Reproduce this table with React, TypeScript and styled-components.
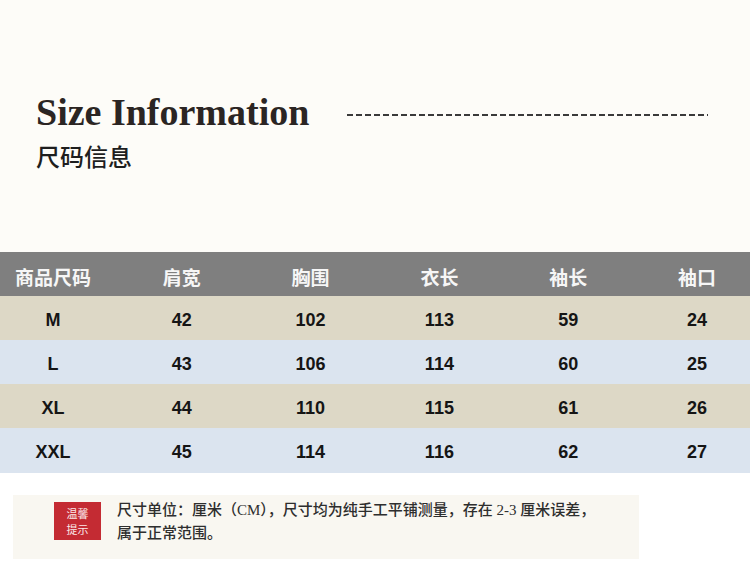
import React from "react";
import styled, { createGlobalStyle } from "styled-components";

const GlobalStyle = createGlobalStyle`
  html, body { margin: 0; padding: 0; background: #ffffff; }
  body { font-family: "Liberation Sans", "Noto Sans CJK SC", sans-serif; }
`;

const Page = styled.div`
  width: 750px;
  height: 566px;
  display: flex;
  flex-direction: column;
  overflow: hidden;
  background: #ffffff;
`;

const Hero = styled.header`
  height: 252px;
  background: #fdfcf8;
  padding: 93px 0 0 36px;
  box-sizing: border-box;
  display: flex;
  flex-direction: column;
`;

const TitleRow = styled.div`
  display: flex;
  align-items: center;
  gap: 38px;
  padding-right: 42px;
`;

const Title = styled.h1`
  margin: 0;
  font-family: "Liberation Serif", "Times New Roman", serif;
  font-weight: 700;
  font-size: 38px;
  line-height: 38px;
  color: #2b2523;
  white-space: nowrap;
`;

const Dash = styled.div`
  flex: 1;
  height: 2px;
  margin-top: 6px;
  background: repeating-linear-gradient(
    to right,
    #3a3a3a 0 6px,
    transparent 6px 9px
  );
`;

const Subtitle = styled.h2`
  margin: 13px 0 0;
  font-family: "Noto Sans CJK SC", sans-serif;
  font-weight: 500;
  font-size: 24px;
  line-height: 24px;
  color: #1e1e1e;
`;

const Table = styled.section`
  display: flex;
  flex-direction: column;
`;

const Row = styled.div<{ $bg: string; $h: number }>`
  height: ${(p) => p.$h}px;
  background: ${(p) => p.$bg};
  display: grid;
  grid-template-columns: repeat(6, 100px);
  justify-content: space-between;
  align-items: center;
  padding: 0 3px;
`;

const HeadCell = styled.div`
  text-align: center;
  font-family: "Noto Sans CJK SC", sans-serif;
  font-weight: 700;
  font-size: 19px;
  color: #f6f6f6;
  padding-top: 4px;
`;

const Cell = styled.div`
  text-align: center;
  font-family: "Liberation Sans", Arial, sans-serif;
  font-weight: 700;
  font-size: 18px;
  color: #151515;
  padding-top: 4px;
`;

const Footer = styled.footer`
  flex: 1;
  padding: 22px 0 0 13px;
  background: #ffffff;
`;

const Note = styled.div`
  width: 626px;
  height: 64px;
  box-sizing: border-box;
  background: #f9f7f1;
  display: flex;
  align-items: flex-start;
  gap: 16px;
  padding: 4px 0 0 41px;
`;

const Badge = styled.div`
  width: 47px;
  height: 38px;
  margin-top: 3px;
  flex: none;
  background: #c42b33;
  color: #fbe9ea;
  font-family: "Noto Sans CJK SC", sans-serif;
  font-size: 11px;
  line-height: 16px;
  text-align: center;
  display: flex;
  flex-direction: column;
  justify-content: center;
`;

const NoteText = styled.p`
  margin: 0;
  font-family: "Liberation Serif", "Noto Sans CJK SC", serif;
  font-weight: 500;
  font-size: 15px;
  line-height: 23px;
  color: #2e2e2e;
`;

const headers = ["商品尺码", "肩宽", "胸围", "衣长", "袖长", "袖口"];
const rows: (string | number)[][] = [
  ["M", 42, 102, 113, 59, 24],
  ["L", 43, 106, 114, 60, 25],
  ["XL", 44, 110, 115, 61, 26],
  ["XXL", 45, 114, 116, 62, 27],
];

export default function App() {
  return (
    <Page>
      <GlobalStyle />
      <Hero>
        <TitleRow>
          <Title>Size Information</Title>
          <Dash />
        </TitleRow>
        <Subtitle>尺码信息</Subtitle>
      </Hero>
      <Table>
        <Row $bg="#7f7f7f" $h={44}>
          {headers.map((h) => (
            <HeadCell key={h}>{h}</HeadCell>
          ))}
        </Row>
        {rows.map((r, i) => (
          <Row key={i} $bg={i % 2 === 0 ? "#ddd8c6" : "#dbe4ef"} $h={i === 3 ? 45 : 44}>
            {r.map((v, j) => (
              <Cell key={j}>{v}</Cell>
            ))}
          </Row>
        ))}
      </Table>
      <Footer>
        <Note>
          <Badge>
            <span>温馨</span>
            <span>提示</span>
          </Badge>
          <NoteText>
            尺寸单位：厘米（CM），尺寸均为纯手工平铺测量，存在 2-3 厘米误差，
            <br />
            属于正常范围。
          </NoteText>
        </Note>
      </Footer>
    </Page>
  );
}
